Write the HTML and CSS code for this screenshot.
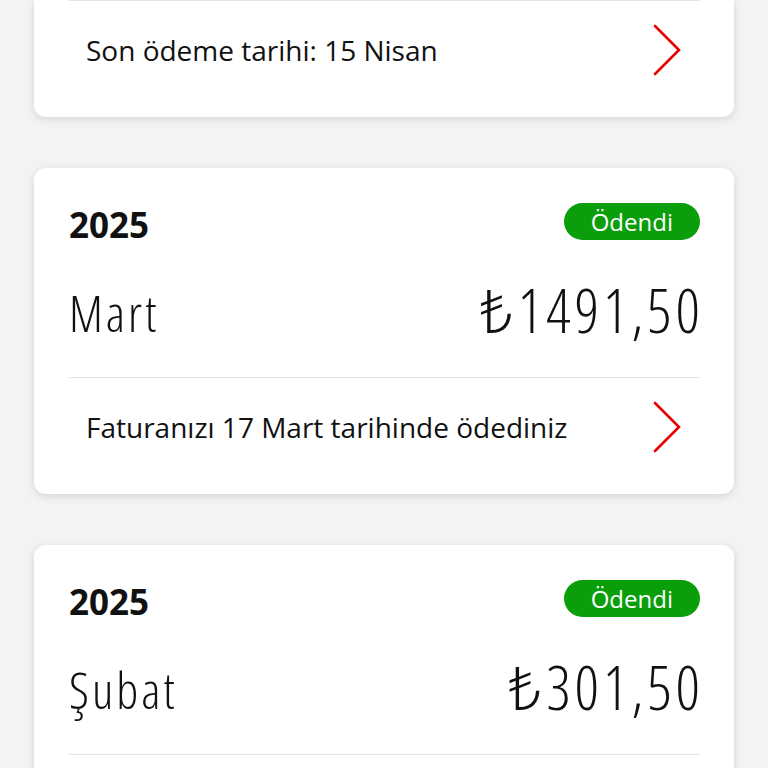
FILE: index.html
```html
<!DOCTYPE html>
<html lang="tr">
<head>
<meta charset="utf-8">
<link rel="stylesheet" href="styles.css">
</head>
<body>
<div class="list">
  <section class="card card-cut">
    <div class="divider"></div>
    <a class="foot">
      <span class="foot-text">Son ödeme tarihi: 15 Nisan</span>
      <svg class="chev" viewBox="0 0 30 52" width="30" height="52"><polyline points="3,2 27,26 3,50" fill="none" stroke="#e60000" stroke-width="2.6" stroke-linecap="round" stroke-linejoin="miter"/></svg>
    </a>
  </section>
  <section class="card">
    <div class="head">
      <span class="year">2025</span>
      <span class="badge">Ödendi</span>
    </div>
    <div class="main">
      <span class="month">Mart</span>
      <span class="amount">₺1491,50</span>
    </div>
    <div class="divider"></div>
    <a class="foot">
      <span class="foot-text">Faturanızı 17 Mart tarihinde ödediniz</span>
      <svg class="chev" viewBox="0 0 30 52" width="30" height="52"><polyline points="3,2 27,26 3,50" fill="none" stroke="#e60000" stroke-width="2.6" stroke-linecap="round" stroke-linejoin="miter"/></svg>
    </a>
  </section>
  <section class="card">
    <div class="head">
      <span class="year">2025</span>
      <span class="badge">Ödendi</span>
    </div>
    <div class="main">
      <span class="month">Şubat</span>
      <span class="amount">₺301,50</span>
    </div>
    <div class="divider"></div>
    <a class="foot">
      <span class="foot-text">Faturanızı 17 Şubat tarihinde ödediniz</span>
      <svg class="chev" viewBox="0 0 30 52" width="30" height="52"><polyline points="3,2 27,26 3,50" fill="none" stroke="#e60000" stroke-width="2.6" stroke-linecap="round" stroke-linejoin="miter"/></svg>
    </a>
  </section>
</div>
</body>
</html>
```
FILE: styles.css
```css
html, body {
  margin: 0;
  padding: 0;
  background: #f3f3f3;
  font-family: "Open Sans", "Noto Sans", sans-serif;
  color: #111;
  overflow: hidden;
}
.list {
  display: flex;
  flex-direction: column;
  gap: 51px;
  padding: 0 34px;
}
.card {
  background: #fff;
  border-radius: 12px;
  box-shadow: 0 2px 8px rgba(0,0,0,0.13);
}
.card-cut {
  border-top-left-radius: 0;
  border-top-right-radius: 0;
}
.head {
  display: flex;
  justify-content: space-between;
  align-items: center;
  padding: 35px 34px 0 35px;
  height: 37px;
}
.year {
  font-size: 35px;
  font-weight: 700;
  font-stretch: 94%;
  line-height: 1;
  padding-top: 5px;
}
.badge {
  background: #0a9e0a;
  color: #fff;
  font-size: 24px;
  font-stretch: 94%;
  line-height: 37px;
  height: 37px;
  padding: 0 27px;
  border-radius: 19px;
}
.main {
  display: flex;
  justify-content: space-between;
  align-items: center;
  padding: 0 34px 0 35px;
  margin: 38px 0 35px;
  height: 64px;
  font-weight: 300;
  font-stretch: 75%;
}
.month {
  font-size: 50px;
  letter-spacing: 3px;
  line-height: 64px;
  padding-top: 6px;
}
.amount {
  font-size: 60px;
  letter-spacing: 4px;
  margin-right: -4px;
  line-height: 64px;
}
.divider {
  height: 1px;
  background: #e4e4e4;
  margin: 0 34px 0 35px;
}
.foot {
  display: flex;
  justify-content: space-between;
  align-items: center;
  height: 98px;
  padding: 0 52px 18px 52px;
}
.foot-text {
  font-size: 28px;
}
.chev {
  display: block;
}
```
